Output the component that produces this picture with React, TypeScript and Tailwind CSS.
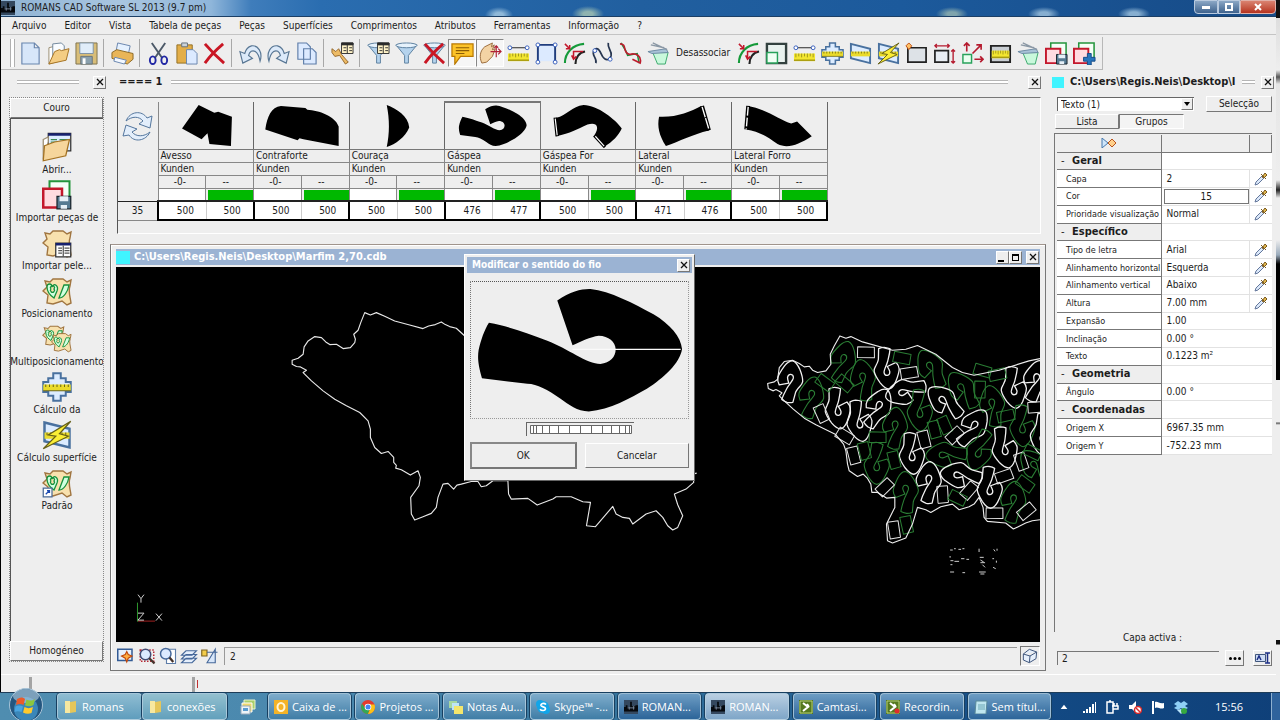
import type { ReactNode } from 'react';

const RAISED = 'border border-t-white border-l-white border-r-[#777] border-b-[#777] bg-[#eeeeee]';
const HOOK =
  'M830 181C870 153 905 145 930 146C990 152 1060 190 1120 222C1170 252 1203 290 1206 327C1200 370 1150 415 1100 447C1050 475 990 510 925 515C890 515 865 495 840 477C800 450 770 433 740 432L603 415C590 370 590 350 593 330C600 300 610 270 624 248C690 260 740 280 800 302C860 325 920 372 960 372C990 370 1006 350 1006 328C1005 305 985 288 955 287C930 290 900 305 876 316Z';
const HIDE = 'M3 5L8 6L11 3L21 3L25 6L29 4L28 10C26 15 28 20 29 27L25 29L20 25L11 28L5 27L6 19L1 15L5 11Z';

function Icon({ children, size = 'size-6' }: { children: ReactNode; size?: string }) {
  return (
    <svg viewBox="0 0 24 24" fill="none" className={`${size} shrink-0`} aria-hidden="true">
      {children}
    </svg>
  );
}

const Ruler = ({ y = 13 }: { y?: number }) => (
  <g>
    <path d={`M1 ${y}h22v8h-22z`} fill="#f3e630" />
    <path d={`M1 ${y + 7}h22`} stroke="#a89b10" strokeWidth="1.5" />
    <path d={`M3 ${y}v4M6 ${y}v3M9 ${y}v4M12 ${y}v3M15 ${y}v4M18 ${y}v3M21 ${y}v4`} stroke="#8a8218" strokeWidth=".8" />
  </g>
);
const RulerPoints = () => (
  <g>
    <path d="M4 6H20" stroke="#222" />
    <circle cx="3" cy="6" r="2" fill="#fff" stroke="#335bbb" />
    <circle cx="21" cy="6" r="2" fill="#fff" stroke="#335bbb" />
    <Ruler y={12} />
  </g>
);
const GreenArcs = () => (
  <g>
    <path d="M2 22C2 11 10 3 22 2" stroke="#159a3a" strokeWidth="2.2" />
    <path d="M13 23C13 16 17 11 23 10" stroke="#222" strokeWidth="2.2" />
    <path d="M2 2L7 7M7 3V7H3M21 10H11V17M9 14L11 18L14 15" stroke="#c3182c" strokeWidth="1.6" />
  </g>
);
const Bin = () => (
  <g>
    <path d="M6 11H22L19 23H11Z" fill="#c9f8dc" stroke="#38a86b" />
    <path d="M1 10L20 7L22 11L5 12Z" fill="#a9c3d8" stroke="#6d8aa3" />
    <path d="M4 3L18 6M6 1L21 8" stroke="#8b98a5" strokeWidth="1.4" />
  </g>
);
const Cross = () => (
  <g>
    <path d="M9 1H15V5H19V8H23V16H19V19H15V23H9V19H5V16H1V8H5V5H9Z" fill="#dcecff" stroke="#49719f" strokeWidth="1.6" />
    <path d="M1 10H23V15H1Z" fill="#eadb2c" />
    <path d="M3 10v2M6 10v2M9 10v2M12 10v2M15 10v2M18 10v2M21 10v2M1 15H23" stroke="#6b6616" strokeWidth=".8" />
  </g>
);
const Area = ({ bolt }: { bolt?: boolean }) => (
  <g>
    <path d="M2 2L22 7V22L2 17Z" fill="#dcecff" stroke="#49719f" strokeWidth="2" />
    <path d="M2 10H22V15H2Z" fill="#eadb2c" />
    <path d="M4 10v2M7 10v2M10 10v2M13 10v2M16 10v2M19 10v2" stroke="#6b6616" strokeWidth=".8" />
    {bolt && <path d="M23 1L5 12L11 13L1 23L21 13L14 11Z" fill="#fbee35" stroke="#655f18" />}
  </g>
);
const Squares = ({ plus }: { plus?: boolean }) => (
  <g>
    <path d="M6 1H22V17H6Z" fill="#f5fff7" stroke="#24953c" strokeWidth="1.6" />
    <path d="M1 7H16V22H1Z" fill="#ffdbe0" stroke="#c3182c" strokeWidth="2" />
    {plus ? (
      <path d="M15 12h4v4h4v4h-4v4h-4v-4h-4v-4h4z" fill="#2775bd" stroke="#174c88" />
    ) : (
      <g>
        <path d="M12 13H23V23H12Z" fill="#557a92" stroke="#18242c" />
        <path d="M14 13H21V17H14ZM15 20H20V23H15Z" fill="#e6f0f7" />
      </g>
    )}
  </g>
);
const Funnel = () => (
  <g>
    <path d="M1 3L10 14V22H14V14L23 3Z" fill="#b5d3ed" stroke="#5c7f9f" />
    <ellipse cx="12" cy="3.5" rx="11" ry="2.5" fill="#e6f2fc" stroke="#5c7f9f" />
  </g>
);
const MiniTable = () => (
  <g>
    <path d="M11 1H23V12H11Z" fill="#fff3c7" stroke="#333" />
    <path d="M11 1H23V3H11ZM17 3V12M13 6H16M13 9H16M19 6H22M19 9H22" fill="#222" stroke="#333" />
  </g>
);
const RedX = () => <path d="M2 2C8 9 15 16 22 22M21 2C14 8 7 15 2 22" stroke="#c91624" strokeWidth="3" />;
const Undo = () => (
  <path d="M22 20C25 11 20 3 13 4C9 5 7 8 6 12L1 10L4 22L14 17L10 14C11 10 14 8 17 10C20 12 21 15 22 20Z" fill="#dceafa" stroke="#597794" strokeWidth="1.2" />
);
const Hide = ({ pieces }: { pieces?: boolean }) => (
  <g transform="scale(.8)">
    <path d={HIDE} fill="#f8e1ae" stroke="#a07540" strokeWidth="1.4" />
    {pieces && (
      <path d="M5 11C5 7 10 7 10 11C12 6 17 10 15 15L12 22C9 20 5 17 5 11ZM17 22L22 9L27 9C26 15 22 22 17 22ZM9 13A2 2 0 1 0 12 13A2 2 0 1 0 9 13" fill="#d0ffdf" stroke="#16903c" strokeWidth="1.3" />
    )}
  </g>
);
const Folder = () => (
  <g>
    <path d="M2 6L13 3V20L2 23Z" fill="#fff" stroke="#9b8d72" />
    <path d="M6 2L15 1L18 4V17H6Z" fill="#f9fcff" stroke="#70869c" />
    <path d="M8 10L13 8L15 9L23 7L20 19L2 23Z" fill="#f4cd84" stroke="#a47222" />
  </g>
);

type Tool = { label: string; icon?: ReactNode; pressed?: boolean };
const TOOL_GROUPS: Tool[][] = [
  [
    { label: 'Novo', icon: <path d="M3 1H16L21 6V23H3Z M16 1V6H21" fill="#d7e6f9" stroke="#6985ad" strokeWidth="1.2" /> },
    { label: 'Abrir', icon: <Folder /> },
    {
      label: 'Guardar',
      icon: (
        <g>
          <path d="M1 1H23V23H1Z" fill="#d8bd78" stroke="#7d724e" />
          <path d="M5 1H19V12H5Z" fill="#e0edf9" stroke="#7c91a5" />
          <path d="M6 15H18V23H6Z" fill="#8aa0ad" stroke="#68747c" />
          <path d="M8 17H11V23H8Z" fill="#fff" />
        </g>
      ),
    },
  ],
  [
    {
      label: 'Imprimir',
      icon: (
        <g>
          <path d="M7 1L20 4L18 13L5 11Z" fill="#e5f1ff" stroke="#6985ad" />
          <path d="M1 11L6 8L23 12V18L17 23L1 17Z" fill="#e9b557" stroke="#8c6824" />
          <path d="M4 16L16 19L14 23L3 20Z" fill="#f3f8ff" stroke="#6985ad" />
        </g>
      ),
    },
  ],
  [
    {
      label: 'Cortar',
      icon: (
        <g>
          <path d="M5 1L16 17M19 1L8 17" stroke="#4c5968" strokeWidth="2" />
          <ellipse cx="6" cy="19" rx="3" ry="4" stroke="#2127a4" strokeWidth="2" />
          <ellipse cx="18" cy="19" rx="3" ry="4" stroke="#2127a4" strokeWidth="2" />
        </g>
      ),
    },
    {
      label: 'Colar',
      icon: (
        <g>
          <path d="M2 3H18V22H2Z" fill="#e3ae48" stroke="#927025" />
          <path d="M7 1H13V5H7Z" fill="#ccd4dc" stroke="#66717c" />
          <path d="M12 8H19L23 12V23H12Z" fill="#dceaff" stroke="#6985ad" />
        </g>
      ),
    },
    { label: 'Eliminar', icon: <RedX /> },
  ],
  [
    { label: 'Anular', icon: <Undo /> },
    { label: 'Refazer', icon: <g transform="translate(24 0) scale(-1 1)"><Undo /></g> },
    {
      label: 'Copiar',
      icon: <path d="M3 1H12L16 5V18H3ZM9 7H18L22 11V23H9Z" fill="#dceaff" stroke="#5e7da8" strokeWidth="1.2" />,
    },
  ],
  [
    {
      label: 'Atributos da ferramenta',
      icon: (
        <g>
          <path d="M1 7L5 10L8 7L11 13L18 21L15 23L9 14L4 15L1 11Z" fill="#edbb65" stroke="#94672c" />
          <MiniTable />
        </g>
      ),
    },
  ],
  [
    { label: 'Tabela de filtros', icon: <g><Funnel /><MiniTable /></g> },
    { label: 'Filtro', icon: <Funnel /> },
    { label: 'Remover filtro', icon: <g><Funnel /><RedX /></g> },
    {
      label: 'Comentários',
      pressed: true,
      icon: (
        <g>
          <path d="M1 2H23V15H10L4 23V15H1Z" fill="#fcc329" stroke="#b97800" strokeWidth="1.3" />
          <path d="M5 6H19M5 9H19M5 12H14" stroke="#8b5c05" strokeWidth="1.2" />
        </g>
      ),
    },
    {
      label: 'Mover',
      pressed: true,
      icon: (
        <g>
          <path d="M3 22C0 16 1 9 6 5L14 1L13 5L16 3L14 8L17 7L14 15L8 21Z" fill="#f3d3a4" stroke="#9a6b3b" />
          <path d="M12 10H23M18 4V16M20 7L23 10L20 13M16 6L18 4L20 6" stroke="#b12034" strokeWidth="1.2" />
        </g>
      ),
    },
    { label: 'Medir distância', icon: <RulerPoints /> },
    {
      label: 'Pontos de canto',
      icon: (
        <g>
          <path d="M3 20V3H21V20" fill="#dceaff" stroke="#203d7d" strokeWidth="2" />
          <g fill="#fff" stroke="#335bbb"><circle cx="3" cy="3" r="2" /><circle cx="21" cy="3" r="2" /><circle cx="3" cy="21" r="2" /><circle cx="21" cy="21" r="2" /></g>
        </g>
      ),
    },
    { label: 'Curvas paralelas', icon: <GreenArcs /> },
    {
      label: 'Curva livre',
      icon: (
        <g>
          <path d="M5 22C7 17 0 14 3 9C7 3 10 11 12 15C16 21 20 18 21 14C22 9 17 7 18 1" stroke="#26354f" strokeWidth="1.8" />
          <g fill="#fff" stroke="#335bbb"><circle cx="4" cy="9" r="2" /><circle cx="20" cy="18" r="2" /></g>
        </g>
      ),
    },
    {
      label: 'Suavizar curva',
      icon: (
        <g>
          <path d="M2 1L7 9L9 14L19 12L21 22" stroke="#16903c" strokeWidth="1.5" />
          <path d="M1 2C9 2 3 11 11 13C18 11 24 15 22 22L14 18" stroke="#bd1d2d" strokeWidth="1.8" />
        </g>
      ),
    },
    { label: 'Reciclar', icon: <Bin /> },
    { label: 'Desassociar' },
    { label: 'Arco paralelo', icon: <GreenArcs /> },
    {
      label: 'Escala',
      icon: <g><path d="M2 2H22V22H2Z" fill="#e9f2ef" stroke="#33413f" strokeWidth="2.5" /><path d="M2 11H13V22H2Z" fill="#f0fff4" stroke="#28a25b" strokeWidth="1.5" /></g>,
    },
    { label: 'Régua', icon: <RulerPoints /> },
    { label: 'Cálculo', icon: <Cross /> },
    { label: 'Superfície', icon: <Area /> },
    { label: 'Superfície rápida', icon: <Area bolt /> },
    {
      label: 'Novo retângulo',
      icon: <g><path d="M3 6H22V21H3Z" fill="#dde2e7" stroke="#222" strokeWidth="1.8" /><path d="M4 1L7 4L4 8L1 4Z" fill="#ffc065" stroke="#c05014" /></g>,
    },
    {
      label: 'Dimensões',
      icon: <g><path d="M2 9H16V21H2Z" fill="#e8edf3" stroke="#222" strokeWidth="1.8" /><path d="M2 4H17M4 2L2 4L4 6M15 2L17 4L15 6M21 8V22M19 10L21 8L23 10M19 20L21 22L23 20" stroke="#b51a2e" strokeWidth="1.4" /></g>,
    },
    {
      label: 'Esticar',
      icon: <g><path d="M2 13H11V22H2Z" fill="#eafff0" stroke="#28a25b" strokeWidth="1.5" /><path d="M6 10V1M3 4L6 1L9 4M12 12L21 3M16 3H21V8M14 18H23M20 15L23 18L20 21" stroke="#b51a2e" strokeWidth="1.7" /></g>,
    },
    { label: 'Fita métrica', icon: <g><path d="M2 4H22V21H2Z" fill="#c9ced3" stroke="#222" strokeWidth="2" /><g transform="translate(2 0) scale(.84 1)"><Ruler y={9} /></g></g> },
    { label: 'Reciclar peça', icon: <Bin /> },
    { label: 'Guardar peças', icon: <Squares /> },
    { label: 'Adicionar peças', icon: <Squares plus /> },
  ],
];

const SIDE: { label: string; icon: ReactNode }[] = [
  {
    label: 'Abrir...',
    icon: (
      <g>
        <path d="M5 1H23V15H5Z" fill="#dcecff" stroke="#333" />
        <path d="M5 1H23V3H5Z" fill="#16206f" />
        <path d="M7 6h5M14 6h7M7 8h5" stroke="#3a8a55" />
        <path d="M1 6L5 4V8L1 22Z" fill="#fff" stroke="#9b8d72" />
        <path d="M2 11L10 8L22 6L19 19L1 23Z" fill="#f6d69c" stroke="#a47222" />
      </g>
    ),
  },
  { label: 'Importar peças de', icon: <Squares /> },
  {
    label: 'Importar pele...',
    icon: (
      <g>
        <Hide />
        <path d="M11 12H23V23H11Z" fill="#fff" stroke="#333" />
        <path d="M11 12H23V14H11Z" fill="#16206f" />
        <path d="M17 14V23M13 16H16M13 18H16M13 20H16M18 16H22M18 18H22M18 20H22" stroke="#555" />
      </g>
    ),
  },
  { label: 'Posicionamento', icon: <Hide pieces /> },
  { label: 'Multiposicionamento', icon: <g><g transform="scale(.75)"><Hide pieces /></g><g transform="translate(7 6) scale(.7)"><Hide pieces /></g></g> },
  { label: 'Cálculo da', icon: <Cross /> },
  { label: 'Cálculo superfície', icon: <Area bolt /> },
  {
    label: 'Padrão',
    icon: <g><Hide pieces /><path d="M1 16H8V23H1Z" fill="#fff" stroke="#4a6a96" /><path d="M3 21L6 18M4 18H6V20" stroke="#1d4bb0" /></g>,
  },
];

const PIECES: { name: string; a: number; b: number; art: ReactNode }[] = [
  { name: 'Avesso', a: 500, b: 500, art: <path d="M40 2L56 10L60 9L74 14L73 44L51 42L49 31L43 37L23 26Z" /> },
  { name: 'Contraforte', a: 500, b: 500, art: <path d="M11 27C13 14 17 4 27 3L52 5L54 7C66 8 82 13 86 24V44L50 37L46 36L44 38Z" /> },
  { name: 'Couraça', a: 500, b: 500, art: <path d="M37 2C47 6 59 13 60 25C56 35 46 42 37 45C40 31 40 17 37 2Z" /> },
  { name: 'Gáspea', a: 476, b: 477, art: <g transform="translate(-53 -14) scale(.1127)"><path d={HOOK} /></g> },
  {
    name: 'Gáspea For',
    a: 500,
    b: 500,
    art: (
      <g>
        <path d="M15 15C26 13 31 3 43 2C57 2 76 17 82 26C79 33 72 40 65 44L54 33C60 24 56 19 47 22C36 27 30 31 15 34Z" />
        <path d="M14 15L16 34M54 33L65 45" fill="none" stroke="#000" strokeWidth="3.5" />
        <path d="M14 16L16 33M55 34L64 44" stroke="#fff" strokeWidth="1.2" />
      </g>
    ),
  },
  {
    name: 'Lateral',
    a: 471,
    b: 476,
    art: <g><path d="M22 14C39 15 54 9 65 3L73 28C56 32 43 39 29 44C22 33 20 24 22 14Z" /><path d="M66 3L73 28" stroke="#000" strokeWidth="4" /><path d="M66 4L73 27" stroke="#fff" strokeWidth="1.4" strokeDasharray="11 1" /></g>,
  },
  {
    name: 'Lateral Forro',
    a: 500,
    b: 500,
    art: <g><path d="M15 3C32 5 48 17 60 21L66 19L81 34C67 43 56 47 46 42C35 34 27 29 14 27Z" /><path d="M16 3L14 27" stroke="#000" strokeWidth="4" /><path d="M16 4L14 27" stroke="#fff" strokeWidth="1.4" strokeDasharray="9 2" /></g>,
  },
];

type Row = { label: string; value?: string; pick?: boolean; head?: boolean; boxed?: boolean };
const ROWS: Row[] = [
  { label: 'Geral', head: true },
  { label: 'Capa', value: '2', pick: true },
  { label: 'Cor', value: '15', pick: true, boxed: true },
  { label: 'Prioridade visualização', value: 'Normal', pick: true },
  { label: 'Específico', head: true },
  { label: 'Tipo de letra', value: 'Arial', pick: true },
  { label: 'Alinhamento horizontal', value: 'Esquerda', pick: true },
  { label: 'Alinhamento vertical', value: 'Abaixo', pick: true },
  { label: 'Altura', value: '7.00 mm', pick: true },
  { label: 'Expansão', value: '1.00' },
  { label: 'Inclinação', value: '0.00 °' },
  { label: 'Texto', value: '0.1223 m²' },
  { label: 'Geometria', head: true },
  { label: 'Ângulo', value: '0.00 °' },
  { label: 'Coordenadas', head: true },
  { label: 'Origem X', value: '6967.35 mm' },
  { label: 'Origem Y', value: '-752.23 mm' },
];

// Nested pieces: centre x, centre y, rotation, 1 = white outline, 0 = green outline
const HOOKS: number[][] = [
  [122, 212, -82, 1], [185, 260, -78, 0], [280, 152, -72, 0], [342, 208, -98, 0], [265, 292, 82, 1], [330, 330, 80, 1],
  [385, 292, -62, 1], [412, 172, 84, 1], [470, 242, 165, 1], [547, 174, -118, 0], [642, 238, -125, 0], [588, 274, -138, 1],
  [512, 298, 88, 0], [437, 352, -85, 0], [730, 286, -98, 0], [670, 350, -52, 1], [383, 458, 92, 0], [488, 428, 85, 1],
  [592, 432, 178, 0], [692, 418, 112, 0], [766, 410, 78, 1], [794, 230, 84, 1], [860, 210, -75, 1], [820, 345, 88, 0],
  [538, 515, -84, 1], [636, 494, -172, 1], [722, 530, 88, 1], [470, 545, -92, 0], [792, 574, -82, 0], [882, 370, 92, 1],
  [862, 470, -130, 0],
];
const QUADS: number[][] = [
  [350, 125, 5, 1], [458, 142, 15, 0], [480, 187, -5, 1], [745, 192, -8, 0], [692, 236, 95, 0], [216, 308, 70, 1],
  [286, 376, 35, 1], [313, 434, 80, 1], [385, 380, 5, 0], [345, 420, 80, 0], [434, 447, 80, 0], [524, 386, 80, 1],
  [555, 356, 80, 0], [586, 343, 70, 0], [617, 374, -40, 1], [770, 316, -8, 0], [407, 530, -40, 1], [580, 551, 90, 1],
  [660, 540, -45, 1], [625, 562, 30, 0], [765, 497, -15, 1], [816, 452, 75, 1], [736, 608, 5, 1], [832, 602, -35, 1],
  [434, 657, 85, 1], [472, 642, 82, 0], [285, 218, 45, 0], [226, 216, 40, 0], [862, 290, 0, 1], [828, 520, 40, 0],
  [700, 180, 20, 0], [850, 425, 30, 0],
];
const MARKS =
  'M603 718h8M615 714h5M628 716h8M640 714h6M603 736v5M604 750h9M616 752h14M636 744h10M652 746h8M604 762h6M603 784h12M640 786h8M690 714v10M692 740h12M694 748l10 6M694 756h14M700 762l8 8M690 784h20M694 790h12M734 716l4 6M744 714v6M730 744h5M742 750v6M732 770l8 4';

function Canvas() {
  return (
    <svg viewBox="116 266 925 376" preserveAspectRatio="xMinYMin slice" className="block h-full w-full" fill="none">
      <g transform="translate(280 240) scale(.33333)" stroke="#e8e8e8" strokeWidth="3.4" strokeLinejoin="round">
        <path d="M560 290L553 283L530 262L510 257L497 251L485 243L467 251L447 255L430 263L390 252L345 240L315 226L290 215L272 222L255 215L243 245L235 268L222 280L227 295L225 305L212 320L190 323L170 310L150 311L138 303L125 290L105 287L85 300L73 318L70 340L55 352L37 358L37 370L50 377L62 378L80 388L70 395L95 420L130 450L165 475L200 495L240 515L265 540L272 565L272 590L285 620L305 638L325 632L342 650L342 665L350 674L348 682L365 687L392 703L415 690L422 710L418 735L393 770L395 820L405 838L430 828L455 818L470 800L475 770L490 730L505 728L522 745L532 733L545 730L575 722L595 722L605 738L620 735L640 720L685 720L687 760L695 775L745 773L773 793L820 775L830 768L875 768L910 783L933 785L921 855L948 858L1000 797L1010 820L1030 830L1050 833L1060 850L1100 820L1130 810L1150 830L1165 855L1180 868L1195 860L1210 825L1195 792L1185 760L1220 745L1243 725L1240 700L1252 697" />
      </g>
      <g transform="translate(750 310) scale(.33333)" strokeWidth="3" strokeLinejoin="round">
        {HOOKS.map(([x, y, r, w], i) => (
          <path key={i} d={HOOK} transform={`translate(${x} ${y}) rotate(${r}) scale(.205) translate(-900 -330)`} stroke={w ? '#f0f0f0' : '#2a7d34'} strokeWidth={w ? 19 : 16} />
        ))}
        {QUADS.map(([x, y, r, w], i) => (
          <path key={i} d="M-26 -15L24 -18L27 13L-24 17Z" transform={`translate(${x} ${y}) rotate(${r})`} stroke={w ? '#e4e4e4' : '#2a7d34'} />
        ))}
        <path stroke="#ececec" strokeWidth="3.4" d="M873 627L850 630L830 637L793 655L770 637L715 632L705 620L702 590L690 560L675 580L660 588L630 597L610 580L575 588L545 605L530 597L505 590L490 640L470 682L430 697L415 690L412 640L437 590L437 560L412 562L385 545L368 545L365 520L355 503L342 490L325 497L300 480L295 460L290 420L283 400L258 370L200 342L165 322L132 295L105 270L90 255L98 246L80 236L72 240L57 233L55 218L75 213L85 205L90 170L105 152L130 148L150 158L165 168L180 166L190 178L205 185L230 180L245 160L243 130L255 105L272 75L290 82L305 77L340 93L430 118L470 115L505 104L535 118L560 130L610 170L640 185L675 193L750 178L840 150L875 143" />
        <path d={MARKS} stroke="#cfcfcf" />
      </g>
      <path d="M137.500 602V621" stroke="#2f9a2f" />
      <path d="M138 620.500H155" stroke="#a02020" />
      <path d="M138 594L141 598M144 594L141 598V602M138 612.500H144L138 619.500H144M156 613L162 620M162 613L156 620" stroke="#d0d0d0" />
    </svg>
  );
}

function CloseButton({ label }: { label: string }) {
  return (
    <button aria-label={label} className={`grid size-[13px] shrink-0 place-items-center ${RAISED}`}>
      <svg viewBox="0 0 8 8" className="size-2" aria-hidden="true"><path d="M1 1L7 7M7 1L1 7" stroke="#111" strokeWidth="1.3" /></svg>
    </button>
  );
}

const Grip = () => <div className="h-1 flex-1 border-y border-[#b5b5b5] bg-white" />;

function AppMark() {
  return (
    <svg viewBox="0 0 16 16" className="size-[14px] shrink-0" aria-hidden="true">
      <path d="M0 0H16V16H0Z" fill="#34485f" />
      <path d="M0 8H2V6H4V8H7V2H9V7H13V6H16V13H0Z" fill="#05080d" />
      <path d="M4 9H12M6 8V11M11 7V11" stroke="#7f90a5" />
    </svg>
  );
}

function Picker() {
  return (
    <svg viewBox="0 0 14 14" className="mx-auto block size-[14px]" fill="none" aria-hidden="true">
      <path d="M1 13L2 10L8 4L10 6L4 12Z" fill="#dbe8fa" stroke="#63779b" />
      <path d="M7 2L12 7M8 5L11 1L13 3L10 6Z" fill="#e4b94d" stroke="#7a5a20" />
    </svg>
  );
}

const Folder2 = () => (
  <svg viewBox="0 0 14 14" className="size-[14px] shrink-0" aria-hidden="true"><path d="M1 1H6V13H1Z" fill="#f7e8a0" /><path d="M6 2L12 1V12L6 13Z" fill="#e5c65a" /></svg>
);
const Leaf = ({ rec }: { rec?: boolean }) => (
  <svg viewBox="0 0 14 14" className="size-[14px] shrink-0" aria-hidden="true" fill="none"><path d="M0 0H14V14H0Z" fill="#55791f" /><path d="M1 1H13V13H1Z" stroke="#b7d079" /><path d="M4 3L9 7L4 11M8 4L10 7" stroke="#fff" strokeWidth="2" />{rec && <circle cx="11" cy="11" r="2.5" fill="#e02b2b" />}</svg>
);

const TASKS: { label: string; icon: ReactNode; active?: boolean }[] = [
  { label: 'Caixa de ...', icon: <svg viewBox="0 0 14 14" className="size-[14px] shrink-0" aria-hidden="true"><path d="M0 0H14V14H0Z" fill="#f4b327" /><ellipse cx="7" cy="7" rx="3.500" ry="4" fill="none" stroke="#fff6d8" strokeWidth="2" /></svg> },
  {
    label: 'Projetos ...',
    icon: <svg viewBox="0 0 14 14" className="size-[14px] shrink-0" aria-hidden="true"><circle cx="7" cy="7" r="7" fill="#e33b2e" /><path d="M1 3.500A7 7 0 0 0 7 14L9 8L4 8Z" fill="#35a853" /><path d="M7 14A7 7 0 0 0 13.500 4.500H8L9.500 8Z" fill="#fbc116" /><circle cx="7" cy="7" r="3.300" fill="#fff" /><circle cx="7" cy="7" r="2.500" fill="#4285f4" /></svg>,
  },
  { label: 'Notas Au...', icon: <svg viewBox="0 0 14 14" className="size-[14px] shrink-0" aria-hidden="true"><path d="M0 1H8V8H0Z" fill="#a8d8a0" /><path d="M3 3H10V10H3Z" fill="#bfe4f5" /><path d="M5 6H14V14H5Z" fill="#f4e66c" /></svg> },
  { label: 'Skype™ -...', icon: <svg viewBox="0 0 14 14" className="size-[14px] shrink-0" aria-hidden="true"><circle cx="7" cy="7" r="6" fill="#12a5e8" /><circle cx="4" cy="4" r="4" fill="#12a5e8" /><circle cx="10" cy="10" r="4" fill="#12a5e8" /><path d="M10 4.500C8 2.500 4.500 3.500 5 5.500C5.500 7.200 9.500 6.500 9.500 8.700C9.300 11 5.500 11 4 9.200" fill="none" stroke="#fff" strokeWidth="1.700" /></svg> },
  { label: 'ROMAN...', icon: <AppMark /> },
  { label: 'ROMAN...', icon: <AppMark />, active: true },
  { label: 'Camtasi...', icon: <Leaf /> },
  { label: 'Recordin...', icon: <Leaf rec /> },
  { label: 'Sem títul...', icon: <svg viewBox="0 0 14 14" className="size-[14px] shrink-0" aria-hidden="true"><path d="M2 1H13L12 14H1Z" fill="#bfe6ef" stroke="#5a8a9a" /><path d="M4 5H11M4 7H11M4 9H11" stroke="#6aa7b5" /></svg> },
];

const TASK_BTN = 'flex min-w-0 items-center gap-1 overflow-hidden rounded-sm border border-[#b5cfe0]/80 text-left whitespace-nowrap shadow-[0_0_0_1px_#173f60]';

export default function App() {
  return (
    <div className="flex h-screen w-full flex-col overflow-hidden bg-[#eeeeee] font-['DejaVu_Sans_Condensed','DejaVu_Sans',sans-serif] text-[10px] leading-3 text-[#1c1c1c]">
      <div className="flex min-h-0 flex-1 border-l border-black">
        <div className="flex min-w-0 flex-1 flex-col">
          <header className="flex h-[17px] shrink-0 items-center justify-between border-b border-[#1b3f66] bg-[radial-gradient(ellipse_14px_8px_at_498px_15px,#8fb8d8_30%,transparent),radial-gradient(ellipse_16px_8px_at_587px_14px,#8fb3b0_30%,transparent),radial-gradient(ellipse_16px_7px_at_951px_14px,#7fa4ac_30%,transparent),radial-gradient(ellipse_16px_7px_at_1043px_14px,#86aed0_30%,transparent),radial-gradient(ellipse_16px_7px_at_1133px_14px,#86aed0_30%,transparent),linear-gradient(90deg,#8fb3d4_0px,#a9c6e0_120px,#8fb6da_210px,#3f7dbb_250px,#2a6db0_320px,#215f9f_640px,#1c5a9c_900px,#164a86_1280px)]">
            <h1 className="flex items-center gap-[6px] leading-4"><AppMark />ROMANS CAD Software SL 2013 (9.7 pm)</h1>
            <div className="flex h-[14px] self-start">
              <button aria-label="Minimizar" className="grid w-6 place-items-center rounded-bl border border-[#b9cade] bg-linear-to-b from-[#8ba7c5] to-[#3f638d]"><span className="h-[3px] w-2 bg-white" /></button>
              <button aria-label="Restaurar" className="grid w-[22px] place-items-center border border-[#b9cade] bg-linear-to-b from-[#8ba7c5] to-[#3f638d]"><span className="size-2 border-2 border-white" /></button>
              <button aria-label="Fechar" className="grid w-9 place-items-center rounded-br border border-[#e0b0a8] bg-linear-to-b from-[#d98270] to-[#b5301c]">
                <svg viewBox="0 0 8 8" className="size-2" aria-hidden="true"><path d="M1 1L7 7M7 1L1 7" stroke="#fff" strokeWidth="2" /></svg>
              </button>
            </div>
          </header>

          <nav className="flex h-[18px] shrink-0 items-center gap-[18px] border-b border-[#c4c4c4] pl-[11px]">
            {['Arquivo', 'Editor', 'Vista', 'Tabela de peças', 'Peças', 'Superfícies', 'Comprimentos', 'Atributos', 'Ferramentas', 'Informação', '?'].map((m) => (
              <a key={m} href="#" className="whitespace-nowrap">{m}</a>
            ))}
          </nav>

          <div className="mt-[2px] flex h-[33px] shrink-0 items-center self-start border-r border-b border-[#b8b8b8] pr-1 pl-[9px]">
            <span className="mr-px h-7 w-[5px] border-x border-[#b0b0b0] bg-white" />
            {TOOL_GROUPS.map((group, g) => (
              <div key={g} className={`flex items-center ${g ? 'ml-[3px] border-l border-[#a8a8a8] pl-1' : ''}`}>
                {group.map((t) => (
                  <button
                    key={t.label}
                    aria-label={t.label}
                    className={`grid h-7 place-items-center ${t.icon ? 'w-7' : 'px-1'} ${t.pressed ? 'border border-t-[#888] border-l-[#888] border-r-white border-b-white bg-[#f6f6f6]' : ''}`}
                  >
                    {t.icon ? <Icon size="size-[23px]">{t.icon}</Icon> : t.label}
                  </button>
                ))}
              </div>
            ))}
          </div>

          <div className="flex min-h-0 flex-1">
            <aside className="flex w-[107px] shrink-0 flex-col pt-[5px] pb-3 pl-2">
              <div className="flex h-[14px] items-center gap-[14px] pr-[2px] pl-2"><Grip /><CloseButton label="Fechar painel" /></div>
              <div className="mt-2 flex min-h-0 w-[95px] flex-1 flex-col border border-dotted border-[#888]">
                <button className={`h-5 shrink-0 text-center ${RAISED}`}>Couro</button>
                <div className="flex min-h-0 flex-1 flex-col overflow-hidden border-t border-l border-[#555] pt-[13px]">
                  {SIDE.map((s) => (
                    <button key={s.label} className="flex h-12 shrink-0 flex-col items-center whitespace-nowrap">
                      <Icon size="size-[30px]">{s.icon}</Icon>
                      <span className="mt-[2px]">{s.label}</span>
                    </button>
                  ))}
                </div>
                <button className={`h-5 shrink-0 text-center ${RAISED}`}>Homogéneo</button>
              </div>
            </aside>

            <main className="flex min-w-0 flex-1 flex-col pb-[3px]">
              <div className="mb-[3px] flex h-6 shrink-0 items-center gap-2 pr-[6px] pl-[11px]"><span className="text-[11px] font-bold whitespace-pre">==== 1</span><Grip /><span className="w-1" /><CloseButton label="Fechar tabela" /></div>
              <div className="mr-[6px] ml-[9px] h-[137px] shrink-0 border border-t-[#777] border-l-[#555] border-r-white border-b-white pt-[3px]">
                <table className="w-[710px] table-fixed border-collapse">
                  <colgroup>
                    <col className="w-10" />
                    {PIECES.flatMap((p) => [<col key={`${p.name}a`} />, <col key={`${p.name}b`} />])}
                  </colgroup>
                  <tbody>
                    <tr className="h-[47px]">
                      <td rowSpan={5} className="border-r border-b border-r-[#888] border-b-[#222] align-top">
                        <button aria-label="Atualizar" className="mt-2 block w-full">
                          <svg viewBox="0 0 32 32" className="mx-auto size-8" fill="#e3eefb" stroke="#54769d" aria-hidden="true">
                            <path d="M4 11C8 1 20 0 25 8L30 6L28 18L17 14L21 11C17 6 10 6 4 11Z" />
                            <path d="M28 22C24 31 12 33 7 25L1 26L4 15L15 19L10 22C14 27 22 27 28 22Z" />
                          </svg>
                        </button>
                      </td>
                      {PIECES.map((p) => (
                        <td key={p.name} colSpan={2} className={`border p-0 ${p.name === 'Gáspea' ? 'border-t-2 border-[#777]' : 'border-t-transparent border-r-[#666] border-b-[#777] border-l-[#666]'}`}>
                          <svg viewBox="0 0 95 46" className="mx-auto block h-[45px] w-[94px]" aria-hidden="true">{p.art}</svg>
                        </td>
                      ))}
                    </tr>
                    <tr className="h-[13px]">{PIECES.map((p) => <td key={p.name} colSpan={2} className="border border-[#888] p-0 pl-[2px] whitespace-nowrap">{p.name}</td>)}</tr>
                    <tr className="h-[13px]">{PIECES.map((p) => <td key={p.name} colSpan={2} className="border border-[#888] p-0 pl-[2px]">Kunden</td>)}</tr>
                    <tr className="h-[13px] text-center">
                      {PIECES.flatMap((p) => [<td key={`${p.name}a`} className="border border-[#888] p-0 pr-1">-0-</td>, <td key={`${p.name}b`} className="border border-[#888] p-0 pr-2">--</td>])}
                    </tr>
                    <tr className="h-[13px]">
                      {PIECES.flatMap((p) => [
                        <td key={`${p.name}a`} className="border border-b-2 border-[#888] border-b-[#222] bg-white p-0" />,
                        <td key={`${p.name}b`} className="border border-b-2 border-[#888] border-b-[#222] bg-[#00b800] p-0 shadow-[inset_2px_1px_0_#eee]" />,
                      ])}
                    </tr>
                    <tr className="h-[19px] text-center">
                      <td className="border-b border-[#888] p-0">35</td>
                      {PIECES.flatMap((p) => [
                        <td key={`${p.name}a`} className="border-b-2 border-l-2 border-black bg-white p-0 pl-[6px]">{p.a}</td>,
                        <td key={`${p.name}b`} className="border-r-2 border-b-2 border-black bg-white p-0 pl-[6px] shadow-[inset_1px_0_0_#ccc]">{p.b}</td>,
                      ])}
                    </tr>
                  </tbody>
                </table>
              </div>

              <section className="relative mt-[10px] mr-px ml-[2px] flex min-h-0 flex-1 flex-col border border-t-[#a0948c] border-l-[#777] border-r-[#777] border-b-[#777] px-[5px] pt-1 pb-px shadow-[inset_1px_1px_0_#fff]">
                <div className="flex h-4 shrink-0 items-center gap-1 bg-[#9bb3d3] pr-px">
                  <span className="h-[13px] w-[14px] bg-[#40f4ff]" />
                  <h2 className="flex-1 text-[11px] font-bold text-white">C:\Users\Regis.Neis\Desktop\Marfim 2,70.cdb</h2>
                  <button aria-label="Minimizar documento" className={`grid h-[13px] w-[13px] place-items-end justify-start p-px ${RAISED}`}><span className="h-[2px] w-[6px] bg-black" /></button>
                  <button aria-label="Restaurar documento" className={`-ml-1 grid h-[13px] w-[13px] place-items-center ${RAISED}`}><span className="size-[7px] border border-t-2 border-black" /></button>
                  <CloseButton label="Fechar documento" />
                </div>
                <div className="mt-[2px] min-h-0 flex-1 overflow-hidden bg-black"><Canvas /></div>
                <div className="flex h-[27px] shrink-0 items-center gap-[3px] pl-px">
                  <button aria-label="Enquadrar"><Icon size="size-[18px]"><path d="M1 3H20V18H1Z" fill="#e7f0fb" stroke="#335b95" strokeWidth="2" /><path d="M13 6L15 10L20 12L15 15L13 20L11 15L6 12L11 10Z" fill="#ffad42" stroke="#c0480c" strokeWidth="1.500" /></Icon></button>
                  <button aria-label="Ampliar zona"><Icon size="size-[18px]"><path d="M3 4H21V19H3Z" stroke="#b52a35" strokeDasharray="2 2" strokeWidth="2" /><circle cx="10" cy="10" r="7" fill="#dceaff" stroke="#444c73" strokeWidth="2" /><path d="M15 15L22 22" stroke="#44322a" strokeWidth="3" /></Icon></button>
                  <button aria-label="Ampliar página"><Icon size="size-[18px]"><path d="M10 3H22V22H10Z" fill="#fff" stroke="#5e7da8" strokeWidth="1.500" /><circle cx="9" cy="9" r="7" fill="#dceaff" stroke="#46689a" strokeWidth="2" /><path d="M14 14L19 20" stroke="#44322a" strokeWidth="3" /></Icon></button>
                  <button aria-label="Camadas"><Icon size="size-[18px]"><path d="M2 21L8 15H22L16 21ZM2 16L8 10H22L16 16ZM2 11L8 5H22L16 11Z" fill="#e5effc" stroke="#46689a" strokeWidth="1.500" /></Icon></button>
                  <button aria-label="Ferramentas de desenho"><Icon size="size-[18px]"><path d="M1 4H8V12H1Z" fill="#f2cc4b" stroke="#7c6220" strokeWidth="1.500" /><path d="M8 7H22M8 21L19 3V21Z" fill="#d7e6fa" stroke="#46689a" strokeWidth="1.500" /></Icon></button>
                  <input aria-label="Camada" defaultValue="2" className="ml-[2px] h-[18px] min-w-0 flex-1 border-t border-l border-[#999] bg-transparent pl-[5px] outline-none" />
                  <button aria-label="Vista 3D" className="grid size-5 place-items-center border border-t-[#777] border-l-[#777] border-r-white border-b-white"><Icon size="size-4"><path d="M2 9L11 2L22 6L21 16L11 22L2 18ZM2 9L12 12L22 6M12 12L11 22" fill="#e6effb" stroke="#40577d" strokeWidth="1.500" /></Icon></button>
                </div>

                <div role="dialog" aria-label="Modificar o sentido do fio" className="absolute top-[9px] left-[353px] flex h-[227px] w-[231px] flex-col border border-t-white border-l-white border-r-[#666] border-b-[#666] bg-[#eeeeee] p-[2px]">
                  <div className="flex h-4 shrink-0 items-center justify-between bg-[#9bb3d3] pr-[2px] pl-[5px]">
                    <h3 className="font-bold text-white">Modificar o sentido do fio</h3>
                    <CloseButton label="Fechar diálogo" />
                  </div>
                  <div className="mx-[3px] mt-2 h-[138px] shrink-0 border border-dotted border-t-[#555] border-l-[#777] border-r-[#999] border-b-[#999]">
                    <svg viewBox="570 126 654 408" className="block h-full w-full" aria-hidden="true">
                      <path d={HOOK} />
                      <path d="M876 328H1202" stroke="#fafafa" strokeWidth="4" />
                    </svg>
                  </div>
                  <div className="mx-auto mt-[3px] flex h-[14px] w-[108px] items-center border-t border-l border-[#666] pl-[3px]">
                    <svg viewBox="0 0 102 9" className="h-[9px] w-[102px]" fill="#fff" stroke="#666" aria-hidden="true">
                      <path d="M.5 .5H101.500V8.500H.5ZM3.500 0V9M6.500 0V9M12.500 0V9M19.500 0V9M28.500 0V9M39.500 0V9M50.500 0V9M61.500 0V9M72.500 0V9M81.500 0V9M89.500 0V9M95.500 0V9M99.500 0V9" />
                    </svg>
                  </div>
                  <div className="mt-[6px] flex gap-2 px-[3px]">
                    <button className="h-[27px] flex-1 border-2 border-t-[#888] border-l-[#888] border-r-[#777] border-b-[#777] bg-[#eeeeee]">OK</button>
                    <button className={`my-px h-[25px] flex-1 ${RAISED}`}>Cancelar</button>
                  </div>
                </div>
              </section>
            </main>

            <aside className="flex w-[229px] shrink-0 flex-col pt-[5px] pl-[5px]">
              <div className="flex h-[14px] shrink-0 items-center gap-[6px] pr-[2px]">
                <span className="h-[11px] w-3 shrink-0 bg-[#40f4ff]" />
                <h2 className="text-[11px] font-bold whitespace-nowrap">C:\Users\Regis.Neis\Desktop\I</h2>
                <Grip />
                <CloseButton label="Fechar propriedades" />
              </div>
              <div className="mt-2 ml-[5px] flex h-[14px] shrink-0 items-stretch justify-between pr-[4px]">
                <div className="relative w-[137px]">
                  <select aria-label="Objeto" className="block h-[14px] w-full appearance-none border-t border-l border-[#666] bg-white pl-[3px] outline-none"><option>Texto (1)</option></select>
                  <span className={`pointer-events-none absolute top-px right-px grid h-3 w-3 place-items-center ${RAISED}`}><svg viewBox="0 0 6 4" className="h-1 w-[6px]" aria-hidden="true"><path d="M0 0H6L3 4Z" /></svg></span>
                </div>
                <button className={`-mt-px h-4 w-[66px] ${RAISED}`}>Selecção</button>
              </div>
              <div className="mt-[3px] ml-[3px] flex h-[15px] shrink-0">
                <button className={`w-16 ${RAISED}`}>Lista</button>
                <button className="w-[65px] border border-t-[#777] border-l-[#777] border-r-white border-b-white bg-[#f4f4f4]">Grupos</button>
              </div>
              <div className="mt-1 mr-[4px] ml-[2px] min-h-0 flex-1 border-t border-l border-[#777] pt-px pl-[2px]">
                <table className="h-[320px] w-full table-fixed border-collapse">
                  <colgroup><col className="w-[104px]" /><col /><col className="w-[22px]" /></colgroup>
                  <thead>
                    <tr className="h-[17px]">
                      <th className="border-r border-b border-[#777] p-0"><svg viewBox="0 0 16 10" className="mx-auto block h-[10px] w-4" aria-hidden="true"><path d="M1 0V10L7 5Z" fill="#cfe6fb" stroke="#4678ad" /><path d="M11 1L15 5L11 9L7 5Z" fill="#ffd08b" stroke="#b9541c" /></svg></th>
                      <th className="border-r border-b border-[#777] p-0" />
                      <th className="border-r border-b border-[#777] p-0" />
                    </tr>
                  </thead>
                  <tbody>
                    {ROWS.map((r) => (
                      <tr key={r.label} className="h-[17px] bg-white">
                        <th scope="row" className={`border-r border-b border-[#777] p-0 text-left whitespace-nowrap ${r.head ? 'bg-[#eeeeee] pl-1 text-[11px] font-bold' : 'pl-[9px] text-[9px] font-normal'}`}>{r.head ? <><span className="mr-1 font-normal">-</span> {r.label}</> : r.label}</th>
                        <td className={`border-b border-[#e2e2e2] p-0 ${r.pick ? 'border-r' : ''} ${r.boxed ? 'text-center' : 'pl-[5px]'}`}>
                          {r.boxed ? <div className="ml-[2px] h-[15px] border border-[#777] leading-[14px]">{r.value}</div> : r.value}
                        </td>
                        <td className="border-b border-[#e2e2e2] p-0">{r.pick && <Picker />}</td>
                      </tr>
                    ))}
                  </tbody>
                </table>
              </div>
              <div className="shrink-0 pr-1 pb-2 pl-[5px]">
                <label htmlFor="capa" className="block pr-6 pb-[6px] text-center">Capa activa :</label>
                <div className="flex items-center gap-[6px]">
                  <input id="capa" defaultValue="2" className="h-[14px] min-w-0 flex-1 border-t border-l border-[#777] bg-transparent pl-[4px] outline-none" />
                  <button aria-label="Escolher capa" className={`grid h-4 w-[19px] place-items-center ${RAISED}`}><svg viewBox="0 0 12 3" className="h-[3px] w-3" aria-hidden="true"><circle cx="1.500" cy="1.500" r="1.500" /><circle cx="6" cy="1.500" r="1.500" /><circle cx="10.500" cy="1.500" r="1.500" /></svg></button>
                  <button aria-label="Renomear capa" className={`ml-[3px] grid h-4 w-[19px] place-items-center ${RAISED}`}><svg viewBox="0 0 16 12" className="h-3 w-4" fill="none" aria-hidden="true"><path d="M.5 2.500H10.500V9.500H.5Z" fill="#cfdcf5" stroke="#40577d" /><path d="M2 8L4 4L6 8M10 1H15M10 11H15M12.500 1V11" stroke="#1c2f86" strokeWidth="1.500" /></svg></button>
                </div>
              </div>
            </aside>
          </div>

          <div className="flex h-[18px] shrink-0 items-start border-t border-white pt-[2px]">
            <span className="ml-[28px] h-3 w-[3px] bg-[#a4a4a4]" />
            <span className="ml-[160px] h-[15px] w-[3px] bg-[#a4a4a4]" />
            <span className="mt-[3px] ml-[2px] h-2 w-px bg-[#c03030]" />
          </div>
        </div>
        <div className="w-1 shrink-0 bg-[linear-gradient(180deg,#111_0px,#111_18px,#ddd_18px,#eee_70px,#555_77px,#e5e5e5_84px,#eee_180px,#222_190px,#eee_198px,#eee_240px,#9ab_255px,#000_264px,#000_380px,#eee_380px,#eee_422px,#555_423px,#eee_425px,#eee_640px,#111_640px,#111_644px,#eee_645px)]" />
      </div>

      <footer className="flex h-7 shrink-0 items-stretch border-t border-[#1d3c58] bg-[linear-gradient(90deg,#4f8db0_0%,#4a88ae_25%,#39789f_45%,#225f92_65%,#134a84_80%,#0f4079_100%)] pl-2 font-['Open_Sans','Noto_Sans',sans-serif] text-[11px] leading-4 text-white">
        <button aria-label="Iniciar" className="-mt-[6px] h-[34px] w-9 shrink-0">
          <svg viewBox="0 0 36 36" className="size-9" aria-hidden="true">
            <circle cx="18" cy="18" r="16.500" fill="#24567f" stroke="#a8c4d8" />
            <circle cx="18" cy="22" r="12" fill="#3a86b8" />
            <ellipse cx="18" cy="9" rx="13" ry="7" fill="#b8d2e2" opacity=".6" />
            <path d="M9 12C12 10 15 10 17 12L15.500 18C13 16.500 10.500 16.500 8 18Z" fill="#ea5b2a" />
            <path d="M18.500 12.500C21 14 24 14 27 12L25.500 18C23 19.500 20 19.500 17 18.500Z" fill="#8cc63e" />
            <path d="M7.500 19.500C10 18 13 18 15 19.500L13.500 25C11 24 8.500 24 6.500 25Z" fill="#4aa5e0" />
            <path d="M16.500 20C19 21.500 22 21.500 25 20L23.500 26C21 27 18 27 15 25.500Z" fill="#fdc92d" />
          </svg>
        </button>
        <div className="ml-[13px] flex w-[170px] shrink-0">
          <button className={`flex-1 bg-linear-to-b from-[#8fbdd2] to-[#5f9dbd] pl-[6px] ${TASK_BTN}`}><Folder2 />Romans</button>
          <button className={`flex-1 bg-linear-to-b from-[#93c0cf] to-[#62a0bc] pl-[6px] ${TASK_BTN}`}><Folder2 />conexões</button>
        </div>
        <button aria-label="Fotografias" className="w-[41px] shrink-0">
          <svg viewBox="0 0 16 16" className="mx-auto size-4" aria-hidden="true"><path d="M4 1H15V10H4Z" fill="#a9cf6a" stroke="#e7f3d0" /><path d="M2 4H12V13H2Z" fill="#f0d66c" stroke="#fff" /><path d="M1 7H10V15H1Z" fill="#eef4f8" stroke="#9ab" /><path d="M3 9H8V12H3Z" fill="#5a9cd0" /></svg>
        </button>
        <div className="flex w-[783px] shrink-0 gap-1">
          {TASKS.map((t, i) => (
            <button key={i} className={`${TASK_BTN} flex-1 pl-[5px] ${t.active ? 'bg-linear-to-b from-[#b9cfe2] to-[#7fa6c8]' : i < 4 ? 'bg-linear-to-b from-[#7eaccb] to-[#3f7da6]' : 'bg-linear-to-b from-[#6d9dc4] to-[#2c6599]'}`}>
              {t.icon}
              <span>{t.label}</span>
            </button>
          ))}
        </div>
        <div className="flex min-w-0 flex-1 items-center gap-[9px] pl-[8px]">
          <svg viewBox="0 0 10 6" className="h-[5px] w-[10px]" fill="#fff" aria-hidden="true"><path d="M1 6H9L5 1Z" /></svg>
          <svg viewBox="0 0 14 14" className="ml-[4px] size-[14px]" fill="#fff" aria-hidden="true"><path d="M1 11h2v2H1zM4 9h2v4H4zM7 7h2v6H7zM10 4h2v9h-2zM13 2h1v11h-1z" /></svg>
          <svg viewBox="0 0 14 14" className="size-[14px]" fill="none" stroke="#fff" strokeWidth="1.500" aria-hidden="true"><path d="M2 2H8V13H2ZM4 1H6M7 6H13V9H8M9 3V6M12 3V6" /></svg>
          <svg viewBox="0 0 14 14" className="size-[14px]" aria-hidden="true"><path d="M1 5H4L8 1V13L4 9H1Z" fill="#fff" /><circle cx="10" cy="10" r="3.500" fill="#fff" stroke="#d82a2a" strokeWidth="1.500" /><path d="M8 8L12 12" stroke="#d82a2a" strokeWidth="1.500" /></svg>
          <svg viewBox="0 0 14 14" className="size-[14px]" fill="#fff" aria-hidden="true"><path d="M1 1H3V14H1ZM4 2C7 1 8 4 13 3V8C9 10 7 6 4 8Z" /></svg>
          <svg viewBox="0 0 14 14" className="size-[14px]" aria-hidden="true"><path d="M4 1L7 3L10 1L14 4L11 6L14 8L10 10L7 8L4 10L0 8L3 6L0 4Z" fill="#8fd0f7" /><path d="M3 10L7 9L10 11L7 14Z" fill="#b9e3fb" /><circle cx="10" cy="11" r="3" fill="#36a83f" /></svg>
          <time className="ml-auto pr-[19px]">15:56</time>
          <button aria-label="Mostrar ambiente de trabalho" className="h-full w-[9px] border-l border-[#8fb1cf] bg-[#2f639c]" />
        </div>
      </footer>
    </div>
  );
}
